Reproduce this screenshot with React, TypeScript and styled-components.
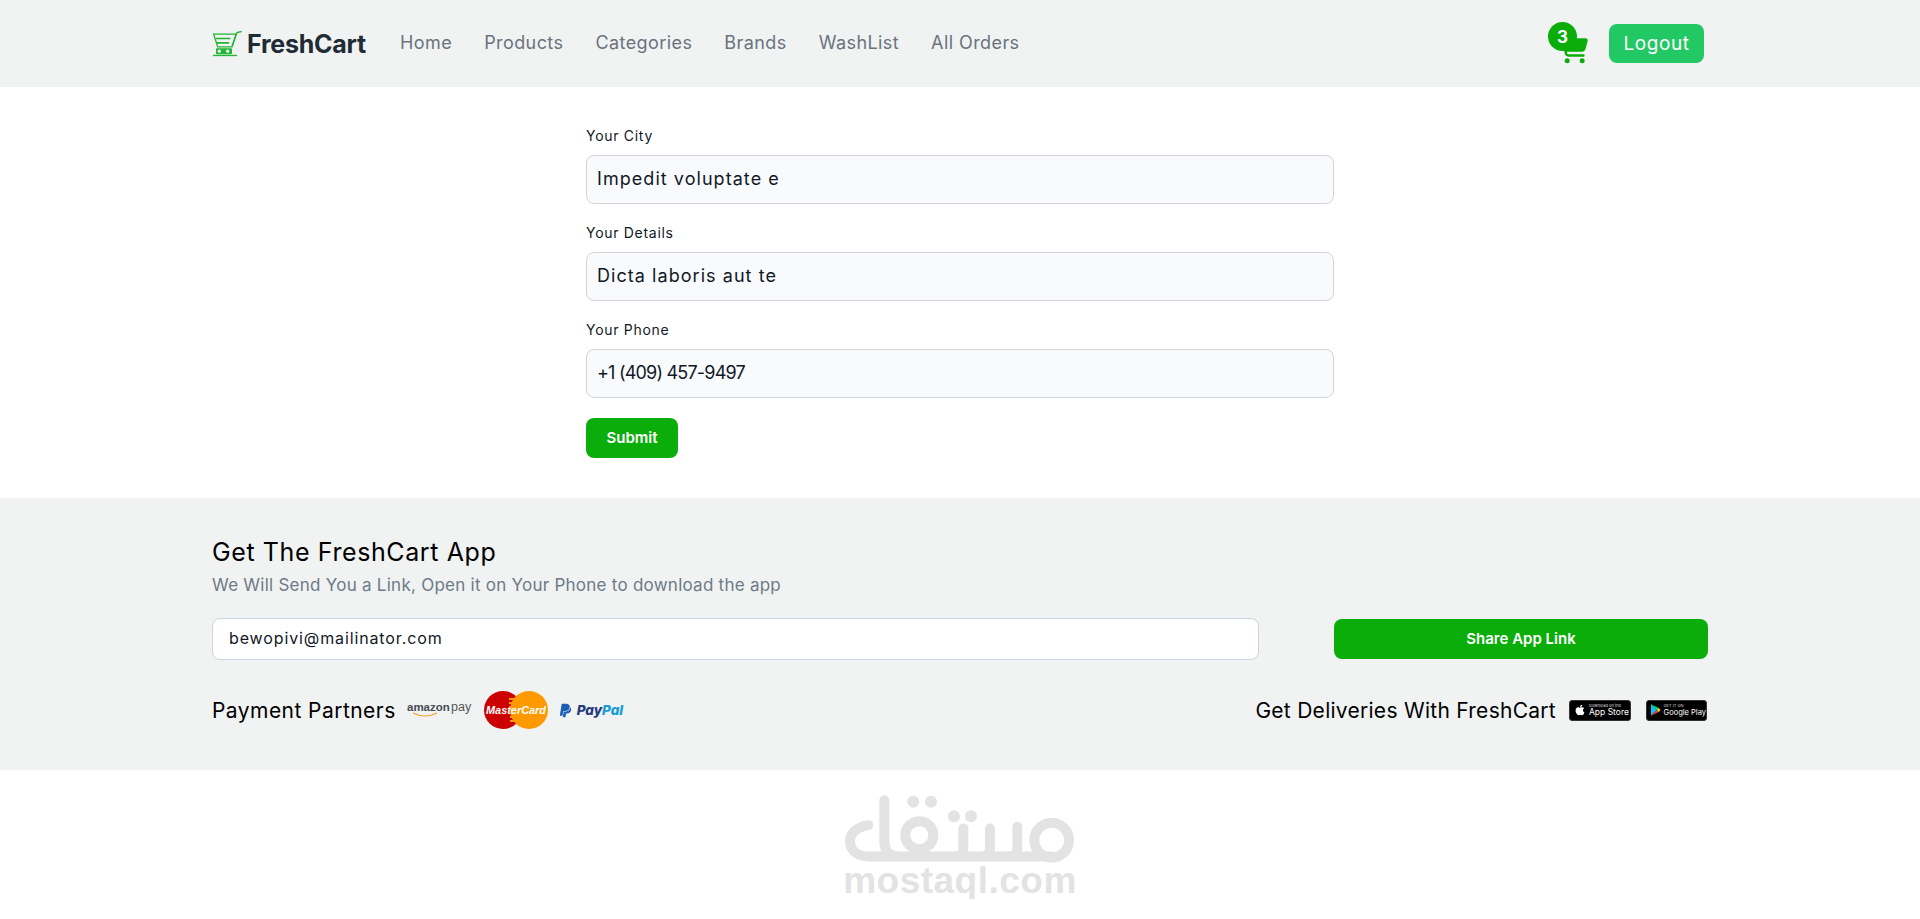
import styled, {createGlobalStyle} from "styled-components"
import {FaApple, FaPaypal} from "react-icons/fa"
import {FaCartShopping} from "react-icons/fa6"

const GlobalStyle = createGlobalStyle`
  html, body {
    margin: 0;
    padding: 0;
    background: #fff;
    font-family: "Inter", "Noto Sans", sans-serif;
    color: #212529;
  }
  * {
    box-sizing: border-box;
  }
`
const Nav = styled.nav`
  height: 87px;
  background: #f0f3f2;
`
const NavInner = styled.div`
  width: 1496px;
  height: 100%;
  margin: 0 auto;
  padding-right: 4px;
  display: flex;
  align-items: center;
`
const Brand = styled.a`
  display: flex;
  align-items: center;
  gap: 4px;
  width: 188px;
  font-size: 25px;
  font-weight: 700;
  letter-spacing: -0.25px;
  color: #212b36;
`
const NavLinks = styled.div`
  display: flex;
  gap: 32px;
  padding-bottom: 2px;
`
const NavLink = styled.a`
  font-size: 18px;
  letter-spacing: 0.42px;
  color: #6b7280;
`
const NavRight = styled.div`
  margin-left: auto;
  display: flex;
  align-items: center;
  gap: 21px;
`
const CartWrap = styled.div`
  position: relative;
  width: 40px;
  height: 43px;
  display: flex;
  align-items: flex-end;
  justify-content: flex-end;
  color: #0aad0a;
`
const CartBadge = styled.span`
  position: absolute;
  left: 0;
  top: 0;
  width: 29px;
  height: 29px;
  border-radius: 50%;
  background: #0aad0a;
  color: #fff;
  font-size: 17px;
  font-weight: 700;
  display: flex;
  align-items: center;
  justify-content: center;
`
const LogoutButton = styled.button`
  width: 95px;
  height: 39px;
  border: 0;
  border-radius: 8px;
  background: #22c863;
  color: #fff;
  font-family: inherit;
  font-size: 19px;
  font-weight: 400;
  letter-spacing: 0.6px;
`
const FormSection = styled.form`
  width: 748px;
  margin: 0 auto;
  padding: 39px 0 40px;
`
const Field = styled.div`
  margin-bottom: 19px;
`
const Label = styled.label`
  display: block;
  height: 20px;
  margin-bottom: 9px;
  font-size: 14px;
  line-height: 20px;
  font-weight: 400;
  letter-spacing: 0.7px;
  color: #111827;
`
const TextInput = styled.input<{$spacing: number}>`
  display: block;
  width: 100%;
  height: 49px;
  padding: 0 10px 2px;
  border: 1px solid #d1d5db;
  border-radius: 8px;
  background: #f9fafb;
  color: #111827;
  font-family: inherit;
  font-size: 18px;
  letter-spacing: ${(p) => p.$spacing}px;
  outline: none;
`
const SubmitButton = styled.button`
  display: block;
  width: 92px;
  height: 40px;
  margin-top: 20px;
  padding-bottom: 3px;
  border: 0;
  border-radius: 8px;
  background: #0aad0a;
  color: #fff;
  font-family: inherit;
  font-size: 15px;
  font-weight: 600;
`
const Footer = styled.footer`
  height: 272px;
  padding-top: 38px;
  background: #f0f3f2;
`
const FooterInner = styled.div`
  width: 1496px;
  margin: 0 auto;
`
const FooterTitle = styled.h2`
  margin: 0;
  font-size: 25px;
  line-height: 32px;
  font-weight: 400;
  letter-spacing: 0.6px;
  color: #000;
`
const FooterText = styled.p`
  margin: 5px 0 0;
  font-size: 17px;
  line-height: 24px;
  letter-spacing: 0.25px;
  color: #6d7a88;
`
const ShareRow = styled.div`
  display: flex;
  justify-content: space-between;
  align-items: center;
  margin-top: 21px;
`
const EmailInput = styled.input`
  width: 1047px;
  height: 42px;
  padding: 0 16px 2px;
  border: 1px solid #cbd5e1;
  border-radius: 8px;
  background: #fff;
  color: #111827;
  font-family: inherit;
  font-size: 16px;
  letter-spacing: 0.88px;
  outline: none;
`
const ShareButton = styled.button`
  width: 374px;
  height: 40px;
  padding-bottom: 3px;
  border: 0;
  border-radius: 8px;
  background: #0aad0a;
  color: #fff;
  font-family: inherit;
  font-size: 15px;
  font-weight: 600;
`
const PartnersRow = styled.div`
  display: flex;
  justify-content: space-between;
  align-items: center;
  height: 46px;
  margin-top: 27px;
`
const PartnerGroup = styled.div`
  display: flex;
  align-items: center;
  padding-right: 1px;
`
const PartnerTitle = styled.span<{$spacing: number}>`
  font-size: 21px;
  letter-spacing: ${(p) => p.$spacing}px;
  color: #000;
`
const AmazonPay = styled.svg`
  margin-left: 11px;
`
const MasterCard = styled.svg`
  margin-left: 12px;
`
const PayPal = styled.div`
  display: flex;
  align-items: center;
  gap: 4px;
  margin-left: 10px;
  font-size: 13.5px;
  font-weight: 800;
  font-style: italic;
  color: #253b80;
`
const PayPalPal = styled.span`
  color: #179bd7;
`
const StoreBadge = styled.div<{$gap: number; $width: number}>`
  display: flex;
  align-items: center;
  gap: 3px;
  width: ${(p) => p.$width}px;
  height: 21px;
  margin-left: ${(p) => p.$gap}px;
  padding-left: 4px;
  border: 1px solid #333;
  border-radius: 3px;
  background: #000;
  color: #fff;
`
const StoreText = styled.div<{$size: number}>`
  display: flex;
  flex-direction: column;
  font-size: ${(p) => p.$size}px;
  line-height: 9px;
  white-space: nowrap;
`
const StoreSmall = styled.span`
  font-size: 4px;
  line-height: 5px;
  color: #ddd;
`
const Watermark = styled.div`
  display: flex;
  flex-direction: column;
  align-items: center;
  padding-top: 25px;
`
const WatermarkText = styled.div`
  font-family: "Liberation Sans", Arial, sans-serif;
  font-size: 37px;
  line-height: 36px;
  font-weight: 700;
  letter-spacing: 0.5px;
  color: #e3e3e3;
`

function CartLogo() {
  return <svg width="31" height="27" viewBox="25 28 93 80" fill="none" stroke="#21b534" strokeWidth="4">
    <path d="M30 40H97L85 78H42Z"/>
    <path d="M36 53H80M40 66H76" strokeWidth="5"/>
    <path d="M85 78L100 35L114 32"/>
    <rect x="37" y="82" width="48" height="18" rx="3" fill="#21b534" stroke="none"/>
    <circle cx="47" cy="91" r="5" fill="#f0f3f2" stroke="none"/>
    <circle cx="72" cy="91" r="5" fill="#f0f3f2" stroke="none"/>
    <path d="M28 104H100"/>
  </svg>
}

function GooglePlayIcon() {
  return <svg width="10" height="12" viewBox="0 0 10 12">
    <path d="M0 0L6 6L0 12Z" fill="#00c3ff"/>
    <path d="M0 0L8 4L6 6Z" fill="#00e676"/>
    <path d="M0 12L8 8L6 6Z" fill="#ff3a44"/>
    <path d="M8 4L10 6L8 8L6 6Z" fill="#ffd600"/>
  </svg>
}

function MostaqlLogo() {
  return <svg width="230" height="68" viewBox="135 75 690 203" fill="none" stroke="#e3e3e3" strokeWidth="30" strokeLinecap="round" strokeLinejoin="round">
    <path d="M205 165C170 170 150 190 150 213C150 243 175 259 210 259H755"/>
    <path d="M253 90V215C253 243 268 259 295 259"/>
    <circle cx="358" cy="195" r="42"/>
    <path d="M490 175V235C490 250 480 259 465 259"/>
    <path d="M570 175V235C570 250 560 259 545 259"/>
    <path d="M652 170V235C652 250 642 259 627 259"/>
    <circle cx="755" cy="210" r="52"/>
    <circle cx="340" cy="95" r="18" fill="#e3e3e3" stroke="none"/>
    <circle cx="393" cy="95" r="18" fill="#e3e3e3" stroke="none"/>
    <circle cx="462" cy="138" r="18" fill="#e3e3e3" stroke="none"/>
    <circle cx="513" cy="138" r="18" fill="#e3e3e3" stroke="none"/>
  </svg>
}

const links = ["Home", "Products", "Categories", "Brands", "WashList", "All Orders"]
const fields = [
  {label: "Your City", value: "Impedit voluptate e", spacing: 1.05},
  {label: "Your Details", value: "Dicta laboris aut te", spacing: 1.05},
  {label: "Your Phone", value: "+1 (409) 457-9497", spacing: -0.8},
]

export default function App() {
  return <>
    <GlobalStyle/>
    <Nav>
      <NavInner>
        <Brand><CartLogo/>FreshCart</Brand>
        <NavLinks>
          {links.map((link) => <NavLink key={link}>{link}</NavLink>)}
        </NavLinks>
        <NavRight>
          <CartWrap>
            <FaCartShopping size={30}/>
            <CartBadge>3</CartBadge>
          </CartWrap>
          <LogoutButton>Logout</LogoutButton>
        </NavRight>
      </NavInner>
    </Nav>
    <FormSection>
      {fields.map((field) =>
        <Field key={field.label}>
          <Label>{field.label}</Label>
          <TextInput readOnly value={field.value} $spacing={field.spacing}/>
        </Field>
      )}
      <SubmitButton type="button">Submit</SubmitButton>
    </FormSection>
    <Footer>
      <FooterInner>
        <FooterTitle>Get The FreshCart App</FooterTitle>
        <FooterText>We Will Send You a Link, Open it on Your Phone to download the app</FooterText>
        <ShareRow>
          <EmailInput readOnly value="bewopivi@mailinator.com"/>
          <ShareButton type="button">Share App Link</ShareButton>
        </ShareRow>
        <PartnersRow>
          <PartnerGroup>
            <PartnerTitle $spacing={0.45}>Payment Partners</PartnerTitle>
            <AmazonPay width="65" height="20" viewBox="0 0 65 20">
              <text x="0" y="11" fontFamily="Liberation Sans" fontSize="11.5" fontWeight="700" fill="#444c56">amazon</text>
              <text x="44" y="11" fontFamily="Liberation Sans" fontSize="12.5" fill="#555">pay</text>
              <path d="M6 13C14 17 22 17 30 13" fill="none" stroke="#f59e2d" strokeWidth="1.2"/>
            </AmazonPay>
            <MasterCard width="64" height="38" viewBox="0 0 64 38">
              <circle cx="19" cy="19" r="19" fill="#cc0000"/>
              <circle cx="45" cy="19" r="19" fill="#ff9900"/>
              <path d="M25 8H38M25 12H39M26 26H38M26 30H37" stroke="#ff9900" strokeWidth="2"/>
              <text x="32" y="23" textAnchor="middle" textLength="60" lengthAdjust="spacingAndGlyphs" fontFamily="Liberation Sans" fontSize="11.5" fontWeight="700" fontStyle="italic" fill="#fff">MasterCard</text>
            </MasterCard>
            <PayPal>
              <FaPaypal size={15} color="#1a5fb4"/>
              <span>Pay<PayPalPal>Pal</PayPalPal></span>
            </PayPal>
          </PartnerGroup>
          <PartnerGroup>
            <PartnerTitle $spacing={0.27}>Get Deliveries With FreshCart</PartnerTitle>
            <StoreBadge $gap={13} $width={62}>
              <FaApple size={12}/>
              <StoreText $size={8.5}><StoreSmall>Download on the</StoreSmall>App Store</StoreText>
            </StoreBadge>
            <StoreBadge $gap={15} $width={61}>
              <GooglePlayIcon/>
              <StoreText $size={7.5}><StoreSmall>GET IT ON</StoreSmall>Google Play</StoreText>
            </StoreBadge>
          </PartnerGroup>
        </PartnersRow>
      </FooterInner>
    </Footer>
    <Watermark>
      <MostaqlLogo/>
      <WatermarkText>mostaql.com</WatermarkText>
    </Watermark>
  </>
}
